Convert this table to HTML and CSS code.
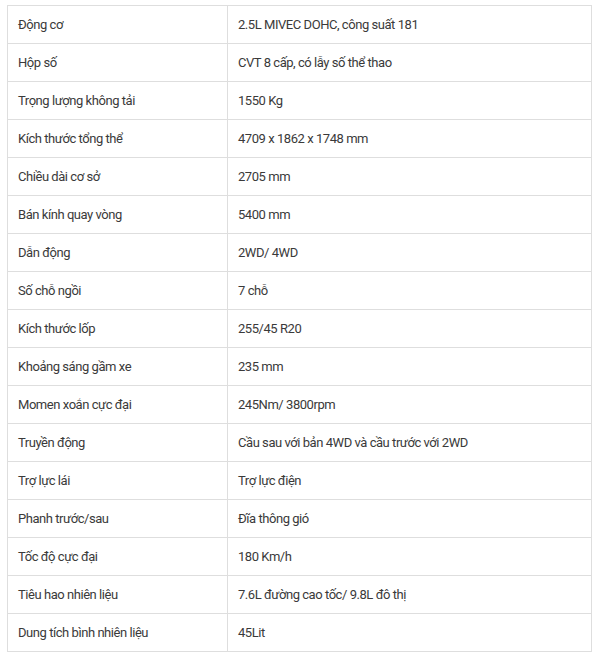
FILE: index.html
```html
<!DOCTYPE html>
<html lang="vi">
<head>
<meta charset="utf-8">
<link rel="stylesheet" href="styles.css">
</head>
<body>
<table class="spec">
<tbody>
<tr><td class="k">Động cơ</td><td>2.5L MIVEC DOHC, công suất 181</td></tr>
<tr><td class="k">Hộp số</td><td>CVT 8 cấp, có lẫy số thể thao</td></tr>
<tr><td class="k">Trọng lượng không tải</td><td>1550 Kg</td></tr>
<tr><td class="k">Kích thước tổng thể</td><td>4709 x 1862 x 1748 mm</td></tr>
<tr><td class="k">Chiều dài cơ sở</td><td>2705 mm</td></tr>
<tr><td class="k">Bán kính quay vòng</td><td>5400 mm</td></tr>
<tr><td class="k">Dẫn động</td><td>2WD/ 4WD</td></tr>
<tr><td class="k">Số chỗ ngồi</td><td>7 chỗ</td></tr>
<tr><td class="k">Kích thước lốp</td><td>255/45 R20</td></tr>
<tr><td class="k">Khoảng sáng gầm xe</td><td>235 mm</td></tr>
<tr><td class="k">Momen xoắn cực đại</td><td>245Nm/ 3800rpm</td></tr>
<tr><td class="k">Truyền động</td><td>Cầu sau với bản 4WD và cầu trước với 2WD</td></tr>
<tr><td class="k">Trợ lực lái</td><td>Trợ lực điện</td></tr>
<tr><td class="k">Phanh trước/sau</td><td>Đĩa thông gió</td></tr>
<tr><td class="k">Tốc độ cực đại</td><td>180 Km/h</td></tr>
<tr><td class="k">Tiêu hao nhiên liệu</td><td>7.6L đường cao tốc/ 9.8L đô thị</td></tr>
<tr><td class="k">Dung tích bình nhiên liệu</td><td>45Lit</td></tr>
</tbody>
</table>
</body>
</html>
```

FILE: styles.css
```css
html, body {
  margin: 0;
  padding: 0;
  background: #ffffff;
}
body {
  padding: 5px 0 0 7px;
  font-family: Roboto, "Liberation Sans", Arial, sans-serif;
  font-size: 13px;
  letter-spacing: -0.45px;
  color: #3a3a3a;
}
.spec {
  border-collapse: collapse;
  width: 585px;
  table-layout: fixed;
}
.spec td {
  border: 1px solid #dedede;
  height: 38px;
  padding: 0 10px;
  box-sizing: border-box;
  vertical-align: middle;
  line-height: 16px;
}
.spec td.k {
  width: 220px;
}
```
